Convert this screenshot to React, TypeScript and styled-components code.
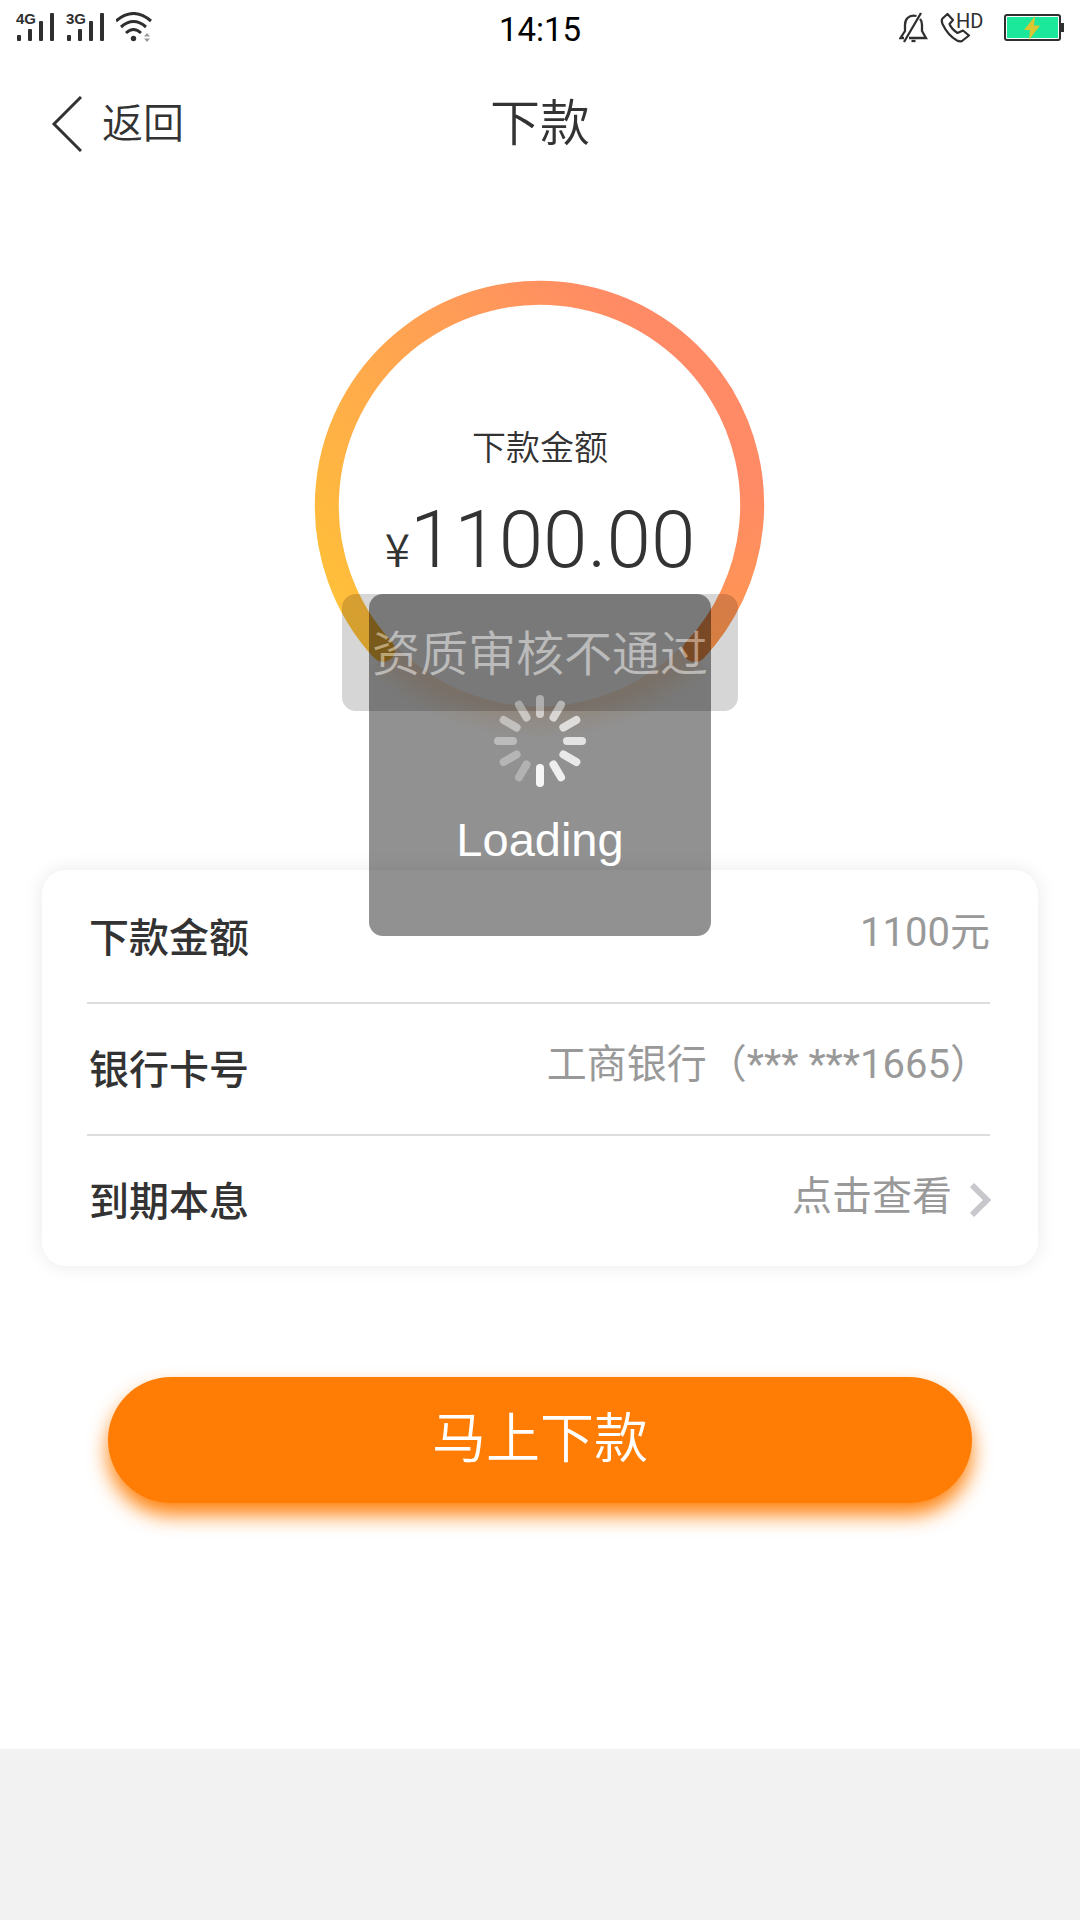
import React from "react";
import styled, { createGlobalStyle } from "styled-components";

const GlobalStyle = createGlobalStyle`
  *, *::before, *::after { box-sizing: border-box; }
  body {
    margin: 0;
    background: #f2f2f2;
    color: #333333;
    font-family: Roboto, "Noto Sans CJK SC", sans-serif;
    font-weight: 350;
  }
  button { font: inherit; border: 0; padding: 0; background: none; cursor: pointer; }
`;

const Screen = styled.div`
  position: relative;
  min-height: 100vh;
  display: flex;
  flex-direction: column;
`;

const StatusBar = styled.div`
  display: grid;
  grid-template-columns: 1fr auto 1fr;
  align-items: center;
  height: 56px;
  padding: 0 16px;
  background: #ffffff;
`;

const StatusGroup = styled.div<{ $end?: boolean }>`
  display: flex;
  align-items: center;
  justify-content: ${(p) => (p.$end ? "flex-end" : "flex-start")};
  gap: 11px;
`;

const Clock = styled.time`
  padding-top: 4px;
  color: #000000;
  font-size: 33px;
  line-height: 52px;
  font-weight: 400;
`;

const Header = styled.header`
  display: grid;
  grid-template-columns: 1fr auto 1fr;
  align-items: center;
  height: 128px;
  padding: 0 50px;
  background: #ffffff;
`;

const BackButton = styled.button`
  display: flex;
  align-items: center;
  justify-self: start;
  gap: 20px;
  padding-top: 8px;
  color: #333333;
  font-size: 41px;
  line-height: 56px;
`;

const Title = styled.h1`
  margin: 0;
  padding-top: 8px;
  font-size: 50px;
  line-height: 64px;
  font-weight: 350;
`;

const Main = styled.main`
  flex: 1;
  display: flex;
  flex-direction: column;
  padding: 96px 42px 0;
  background: #ffffff;
`;

const Gauge = styled.section`
  display: grid;
  justify-items: center;
  margin-bottom: 110px;
  & > * { grid-area: 1 / 1; }
`;

const GaugeText = styled.div`
  display: flex;
  flex-direction: column;
  align-items: center;
  padding-top: 144px;
`;

const GaugeLabel = styled.span`
  font-size: 34px;
  line-height: 48px;
`;

const Amount = styled.strong`
  margin-top: 10px;
  font-size: 80px;
  line-height: 116px;
  font-weight: 300;
`;

const Currency = styled.span`
  font-family: "Noto Sans CJK SC", sans-serif;
  font-size: 46px;
  line-height: 46px;
  font-weight: 350;
`;

const Card = styled.dl`
  margin: 0;
  padding: 0 48px 0 45px;
  border-radius: 24px;
  background: #ffffff;
  box-shadow: 0 0 20px rgba(0, 0, 0, 0.09);
`;

const Row = styled.div`
  display: flex;
  align-items: center;
  justify-content: space-between;
  height: 132px;
  border-top: 2px solid #dddddd;
  &:first-child { border-top-color: transparent; }
`;

const Term = styled.dt`
  padding: 3px 0 0 2px;
  font-size: 40px;
  line-height: 58px;
  font-weight: 500;
`;

const Value = styled.dd`
  margin: 0;
  padding-bottom: 8px;
  color: #999999;
  font-size: 40px;
  line-height: 58px;
  font-weight: 400;
`;

const DetailButton = styled.button`
  display: flex;
  align-items: center;
  gap: 18px;
  color: inherit;
  line-height: 58px;
  svg { margin: 5px -2px 0 0; }
`;

const SubmitButton = styled.button`
  align-self: center;
  width: calc(100% - 132px);
  height: 126px;
  margin: 111px 0 246px;
  padding-bottom: 12px;
  border-radius: 63px;
  background: #ff7d04;
  box-shadow: 0 12px 20px rgba(255, 125, 4, 0.95);
  color: #ffffff;
  font-size: 54px;
`;

const Footer = styled.footer`
  height: 171px;
  background: #f2f2f2;
`;

const Overlay = styled.div`
  position: absolute;
  inset: 594px 0 auto;
  display: grid;
  justify-items: center;
  align-items: start;
  pointer-events: none;
  & > * { grid-area: 1 / 1; }
`;

const Hud = styled.div`
  display: flex;
  flex-direction: column;
  align-items: center;
  gap: 23px;
  width: 342px;
  height: 342px;
  padding-top: 101px;
  border-radius: 14px;
  background: rgba(0, 0, 0, 0.43);
  color: #ffffff;
  font-family: "Liberation Sans", sans-serif;
  font-size: 47px;
  line-height: 60px;
`;

const Toast = styled.div`
  padding: 28px 30px 24px;
  border-radius: 14px;
  background: rgba(0, 0, 0, 0.42);
  color: #ffffff;
  font-size: 48px;
  line-height: 65px;
  opacity: 0.38;
`;

function Signal({ label }: { label: string }) {
  return (
    <svg width="39" height="40" viewBox="0 -4 39 40" fill="#2f2f2f">
      <text x="0" y="12" fontFamily="Liberation Sans, sans-serif" fontSize="15" fontWeight="700">
        {label}
      </text>
      <rect x="1" y="23" width="4" height="6" rx="1" />
      <rect x="12" y="17" width="4" height="12" rx="1" />
      <rect x="23" y="9" width="4" height="20" rx="1" />
      <rect x="34" y="1" width="4" height="28" rx="1" />
    </svg>
  );
}

function Wifi() {
  return (
    <svg width="38" height="32" viewBox="0 0 38 32" fill="none" stroke="#2f2f2f" strokeWidth="3">
      <path d="M0 9Q17.500 -6 35 9" />
      <path d="M5 15Q17.500 4 30 15" />
      <path d="M10 21Q17.500 14 25 21" />
      <circle cx="17.500" cy="26.500" r="2.700" fill="#2f2f2f" stroke="none" />
      <path d="M28 24.500L31 21L34 24.500ZM28 26.500H34L31 30Z" fill="#999999" stroke="none" />
    </svg>
  );
}

function MutedBell() {
  return (
    <svg width="29" height="32" viewBox="0 0 29 32" fill="none" stroke="#2f2f2f" strokeWidth="2.300">
      <path d="M10 26H27L23 19V13Q23 9 21 7M17.500 4Q12 2.500 8.500 6Q6 8.500 6 13V19L1.500 26H5" />
      <path d="M22 1L5 30" />
      <path d="M12.500 29H16.500" />
    </svg>
  );
}

function HdCall() {
  return (
    <svg width="53" height="40" viewBox="0 -4 53 40" fill="none" stroke="#2f2f2f" strokeWidth="2.200">
      <path d="M8.500 2L3.500 6.500Q2 8 3.500 12Q9 23.500 18 28.500Q21 30 23 29L30 23.500L24 18.500L18.500 21Q12.500 17 10.500 12L14 8Z" strokeLinejoin="round" />
      <text x="17" y="16" fill="#2f2f2f" stroke="none" fontFamily="Roboto, sans-serif" fontSize="20" fontWeight="400">
        HD
      </text>
    </svg>
  );
}

function Battery() {
  return (
    <svg width="61" height="28" viewBox="0 0 61 28">
      <rect x="2" y="1" width="55" height="25" rx="2" fill="#ffffff" stroke="#2f2f2f" strokeWidth="2" />
      <rect x="4" y="3" width="51" height="21" fill="#1be89b" />
      <rect x="58" y="9" width="3" height="9" fill="#2f2f2f" />
      <path d="M32 2L21 16H27L26 26L37 11.500H31Z" fill="#d9c631" />
    </svg>
  );
}

function Ring() {
  return (
    <svg width="500" height="480" viewBox="0 -1 500 480" fill="none">
      <defs>
        <linearGradient id="ring" gradientUnits="userSpaceOnUse" x1="70" y1="370" x2="400" y2="100">
          <stop offset="0" stopColor="#ffc138" />
          <stop offset="1" stopColor="#ff8a66" />
        </linearGradient>
        <linearGradient id="ringEnd" gradientUnits="userSpaceOnUse" x1="440" y1="200" x2="405" y2="380">
          <stop offset="0" stopColor="#ff8a66" />
          <stop offset="1" stopColor="#ff9a4c" />
        </linearGradient>
        <radialGradient id="glow" gradientUnits="userSpaceOnUse" cx="249" cy="195" r="262">
          <stop offset="0.78" stopColor="#ff9440" stopOpacity="0.3" />
          <stop offset="0.9" stopColor="#ff9c40" stopOpacity="0.17" />
          <stop offset="1" stopColor="#ffa040" stopOpacity="0" />
        </radialGradient>
      </defs>
      <path d="M102 361A200 200 0 0 0 396 361L419 395Q349 470 249 470T79 395Z" fill="url(#glow)" />
      <path d="M93 369A213 213 0 1 1 432 114.500" stroke="url(#ring)" strokeWidth="24" strokeLinecap="round" />
      <path d="M432 114.500A213 213 0 0 1 405 369" stroke="url(#ringEnd)" strokeWidth="24" strokeLinecap="round" />
    </svg>
  );
}

const SPOKES = [0.58, 0.65, 0.7, 0.75, 0.8, 0.86, 0.92, 0.3, 0.33, 0.38, 0.45, 0.52];

function Spinner() {
  return (
    <svg width="92" height="92" viewBox="-46 -46 92 92" fill="#ffffff">
      {SPOKES.map((opacity, i) => (
        <rect key={i} x="-4" y="-46" width="8" height="23" rx="4" opacity={opacity} transform={`rotate(${i * 30})`} />
      ))}
    </svg>
  );
}

export default function App() {
  return (
    <Screen>
      <GlobalStyle />
      <StatusBar>
        <StatusGroup>
          <Signal label="4G" />
          <Signal label="3G" />
          <Wifi />
        </StatusGroup>
        <Clock>14:15</Clock>
        <StatusGroup $end>
          <MutedBell />
          <HdCall />
          <Battery />
        </StatusGroup>
      </StatusBar>
      <Header>
        <BackButton type="button">
          <svg width="32" height="56" viewBox="0 0 32 56" fill="none" stroke="#333333" strokeWidth="3">
            <path d="M31 1L4 28L31 55" />
          </svg>
          返回
        </BackButton>
        <Title>下款</Title>
      </Header>
      <Main>
        <Gauge>
          <Ring />
          <GaugeText>
            <GaugeLabel>下款金额</GaugeLabel>
            <Amount>
              <Currency>¥</Currency>1100.00
            </Amount>
          </GaugeText>
        </Gauge>
        <Card>
          <Row>
            <Term>下款金额</Term>
            <Value>1100元</Value>
          </Row>
          <Row>
            <Term>银行卡号</Term>
            <Value>工商银行（*** ***1665）</Value>
          </Row>
          <Row>
            <Term>到期本息</Term>
            <Value>
              <DetailButton type="button">
                点击查看
                <svg width="22" height="36" viewBox="0 0 22 36" fill="none" stroke="#c7c7cc" strokeWidth="6">
                  <path d="M2 3L17 18L2 33" />
                </svg>
              </DetailButton>
            </Value>
          </Row>
        </Card>
        <SubmitButton type="button">马上下款</SubmitButton>
      </Main>
      <Footer />
      <Overlay>
        <Hud role="status">
          <Spinner />
          Loading
        </Hud>
        <Toast role="alert">资质审核不通过</Toast>
      </Overlay>
    </Screen>
  );
}
